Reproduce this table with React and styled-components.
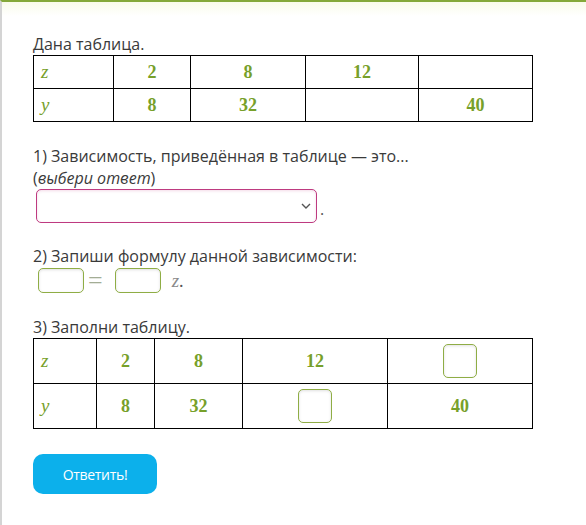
import React from "react";
import styled, { createGlobalStyle } from "styled-components";

const Global = createGlobalStyle`
  html, body { margin: 0; padding: 0; background: #fff; }
  body { font-family: "Open Sans", "Liberation Sans", sans-serif; }
`;

const Page = styled.div`
  box-sizing: border-box;
  min-height: 525px;
  border-top: 2px solid #84a83a;
  border-left: 2px solid #d4d4d4;
  background: linear-gradient(#f9fbea 0px, #ffffff 14px);
  padding: 31px 0 0 31px;
  color: #3a3a3a;
  font-size: 16px;
  line-height: 22px;
`;

const Line = styled.div`
  margin-top: ${(p) => p.$mt || 0}px;
`;

const Em = styled.i`
  font-style: italic;
`;

const Table = styled.table`
  border-collapse: collapse;
  width: 500px;
  table-layout: fixed;
  font-family: "Liberation Serif", "DejaVu Serif", serif;
  color: #77a02a;
`;

const Cell = styled.td`
  border: 1px solid #000;
  height: ${(p) => p.$h}px;
  padding: 0;
  box-sizing: border-box;
  text-align: ${(p) => (p.$var ? "left" : "center")};
  padding-left: ${(p) => (p.$var ? 7 : 0)}px;
  font-size: ${(p) => (p.$var ? 19 : 18)}px;
  font-weight: ${(p) => (p.$var ? 400 : 700)};
  font-style: ${(p) => (p.$var ? "italic" : "normal")};
  vertical-align: middle;
`;

const SelectRow = styled.div`
  display: flex;
  align-items: flex-end;
  gap: 3px;
  padding-left: 3px;
`;

const SelectBox = styled.div`
  box-sizing: border-box;
  width: 281px;
  height: 34px;
  border: 1px solid #be3a80;
  border-radius: 5px;
  box-shadow: inset 0 1px 3px rgba(190, 58, 128, 0.18);
  display: flex;
  align-items: center;
  justify-content: flex-end;
  padding-right: 5px;
  background: #fff;
`;

const Dot = styled.span`
  line-height: 16px;
  margin-bottom: 6px;
  color: #555;
`;

const FormulaRow = styled.div`
  display: flex;
  align-items: center;
  padding-left: 5px;
  margin-top: 1px;
  height: 25px;
`;

const Box = styled.div`
  box-sizing: border-box;
  width: ${(p) => p.$w}px;
  height: ${(p) => p.$h}px;
  border: 1px solid #8fad45;
  border-radius: 5px;
  background: #fff;
  box-shadow: inset 0 1px 3px rgba(0, 0, 0, 0.12);
  margin: ${(p) => (p.$center ? "0 auto" : "0")};
`;

const MathSym = styled.span`
  font-family: "Liberation Serif", "DejaVu Serif", serif;
  font-size: ${(p) => p.$size || 18}px;
  font-style: ${(p) => (p.$italic ? "italic" : "normal")};
  color: ${(p) => p.$color || "#8a8a8a"};
  margin: ${(p) => p.$m || "0"};
  line-height: 1;
`;

const Button = styled.button`
  margin-top: 25px;
  width: 124px;
  height: 40px;
  border: none;
  border-radius: 10px;
  background: #0cb0eb;
  color: #fff;
  font-family: "Open Sans", "Liberation Sans", sans-serif;
  font-size: 14px;
  letter-spacing: -0.3px;
  padding: 0;
  cursor: pointer;
`;

const Chevron = () => (
  <svg width="10" height="6" viewBox="0 0 10 6">
    <path d="M1 1 L5 5 L9 1" fill="none" stroke="#555" strokeWidth="1.4" />
  </svg>
);

const t1Cols = [80, 77, 115, 113, 114];
const t2Cols = [63, 58, 88, 145, 145];

export default function App() {
  return (
    <>
      <Global />
      <Page>
        <Line>Дана таблица.</Line>
        <Table>
          <colgroup>
            {t1Cols.map((w, i) => (
              <col key={i} style={{ width: w }} />
            ))}
          </colgroup>
          <tbody>
            <tr>
              <Cell $h={33} $var>z</Cell>
              <Cell $h={33}>2</Cell>
              <Cell $h={33}>8</Cell>
              <Cell $h={33}>12</Cell>
              <Cell $h={33}></Cell>
            </tr>
            <tr>
              <Cell $h={33} $var>y</Cell>
              <Cell $h={33}>8</Cell>
              <Cell $h={33}>32</Cell>
              <Cell $h={33}></Cell>
              <Cell $h={33}>40</Cell>
            </tr>
          </tbody>
        </Table>

        <Line $mt={23}>1) Зависимость, приведённая в таблице — это...</Line>
        <Line>
          (<Em>выбери ответ</Em>)
        </Line>
        <SelectRow>
          <SelectBox>
            <Chevron />
          </SelectBox>
          <Dot>.</Dot>
        </SelectRow>

        <Line $mt={22}>2) Запиши формулу данной зависимости:</Line>
        <FormulaRow>
          <Box $w={46} $h={25} />
          <MathSym $size={26} $color="#a3ad95" $m="0 12px 0 4px">=</MathSym>
          <Box $w={46} $h={25} />
          <MathSym $size={19} $italic $color="#8a8a8a" $m="0 0 0 11px">z</MathSym>
          <MathSym $color="#555">.</MathSym>
        </FormulaRow>

        <Line $mt={23}>3) Заполни таблицу.</Line>
        <Table>
          <colgroup>
            {t2Cols.map((w, i) => (
              <col key={i} style={{ width: w }} />
            ))}
          </colgroup>
          <tbody>
            <tr>
              <Cell $h={45} $var>z</Cell>
              <Cell $h={45}>2</Cell>
              <Cell $h={45}>8</Cell>
              <Cell $h={45}>12</Cell>
              <Cell $h={45}>
                <Box $w={34} $h={34} $center />
              </Cell>
            </tr>
            <tr>
              <Cell $h={45} $var>y</Cell>
              <Cell $h={45}>8</Cell>
              <Cell $h={45}>32</Cell>
              <Cell $h={45}>
                <Box $w={34} $h={34} $center />
              </Cell>
              <Cell $h={45}>40</Cell>
            </tr>
          </tbody>
        </Table>

        <Button>Ответить!</Button>
      </Page>
    </>
  );
}
